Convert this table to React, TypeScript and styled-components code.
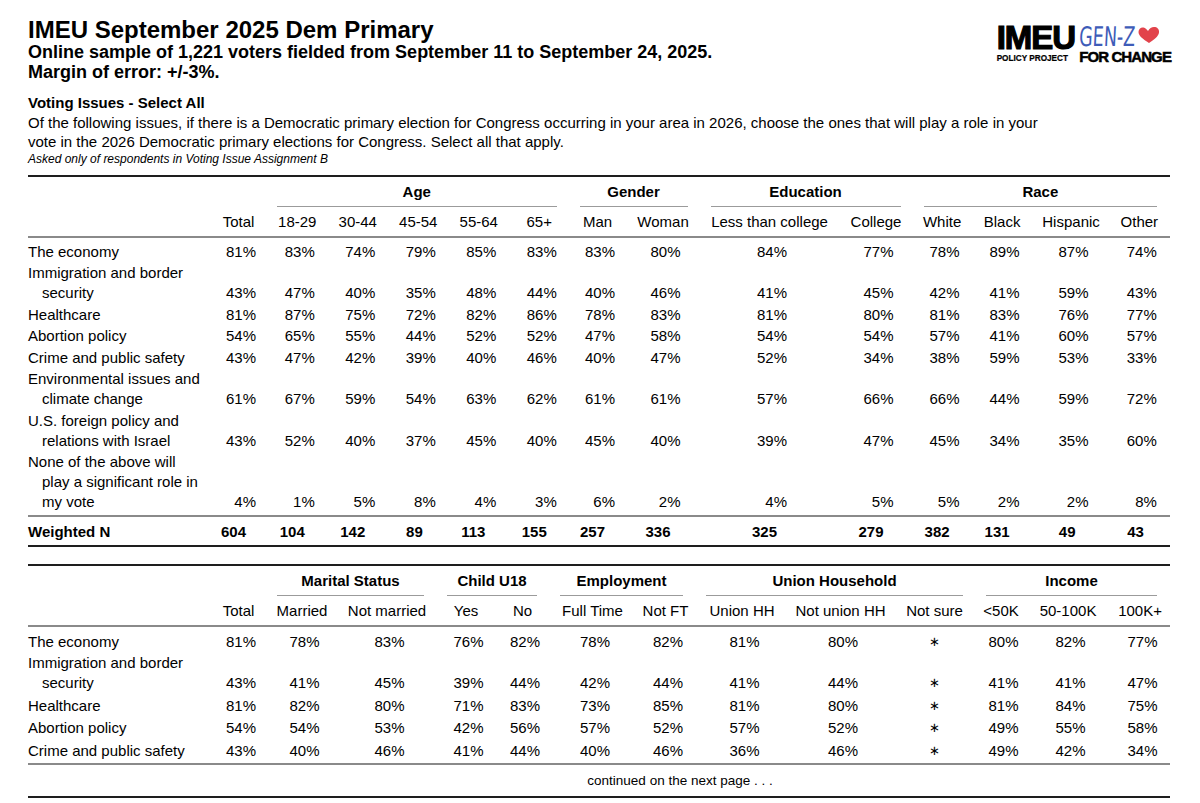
import * as React from "react";
import styled, { createGlobalStyle } from "styled-components";

const GlobalStyle = createGlobalStyle`
  html, body {
    margin: 0;
    padding: 0;
    background: #ffffff;
  }
  body {
    font-family: "Liberation Sans", Arial, Helvetica, sans-serif;
    color: #000;
  }
`;

type Cell = { v: string; star?: boolean };
type Row = { label: string[]; cells: Cell[] };
type Group = { label?: string; span: number };

const pct = (list: (number | "*")[]): Cell[] =>
  list.map((n) => (n === "*" ? { v: "\u2217", star: true } : { v: `${n}%` }));

const topWidths = [182, 57, 60.5, 60.5, 60.5, 60.5, 60.5, 56, 75, 138, 75, 57, 63, 75, 61.5];
const topHeads = [
  "Total", "18-29", "30-44", "45-54", "55-64", "65+", "Man", "Woman",
  "Less than college", "College", "White", "Black", "Hispanic", "Other",
];
const topGroups: Group[] = [
  { span: 2 },
  { label: "Age", span: 5 },
  { label: "Gender", span: 2 },
  { label: "Education", span: 2 },
  { label: "Race", span: 4 },
];
const topRows: Row[] = [
  { label: ["The economy"], cells: pct([81, 83, 74, 79, 85, 83, 83, 80, 84, 77, 78, 89, 87, 74]) },
  { label: ["Immigration and border", "security"], cells: pct([43, 47, 40, 35, 48, 44, 40, 46, 41, 45, 42, 41, 59, 43]) },
  { label: ["Healthcare"], cells: pct([81, 87, 75, 72, 82, 86, 78, 83, 81, 80, 81, 83, 76, 77]) },
  { label: ["Abortion policy"], cells: pct([54, 65, 55, 44, 52, 52, 47, 58, 54, 54, 57, 41, 60, 57]) },
  { label: ["Crime and public safety"], cells: pct([43, 47, 42, 39, 40, 46, 40, 47, 52, 34, 38, 59, 53, 33]) },
  { label: ["Environmental issues and", "climate change"], cells: pct([61, 67, 59, 54, 63, 62, 61, 61, 57, 66, 66, 44, 59, 72]) },
  { label: ["U.S. foreign policy and", "relations with Israel"], cells: pct([43, 52, 40, 37, 45, 40, 45, 40, 39, 47, 45, 34, 35, 60]) },
  {
    label: ["None of the above will", "play a significant role in", "my vote"],
    cells: pct([4, 1, 5, 8, 4, 3, 6, 2, 4, 5, 5, 2, 2, 8]),
  },
];
const topN = ["604", "104", "142", "89", "113", "155", "257", "336", "325", "279", "382", "131", "49", "43"];

const bottomWidths = [182, 57, 70, 100, 58, 55, 85, 61, 92, 105, 83, 50, 84, 60];
const bottomHeads = [
  "Total", "Married", "Not married", "Yes", "No", "Full Time", "Not FT",
  "Union HH", "Not union HH", "Not sure", "<50K", "50-100K", "100K+",
];
const bottomGroups: Group[] = [
  { span: 2 },
  { label: "Marital Status", span: 2 },
  { label: "Child U18", span: 2 },
  { label: "Employment", span: 2 },
  { label: "Union Household", span: 3 },
  { label: "Income", span: 3 },
];
const bottomRows: Row[] = [
  { label: ["The economy"], cells: pct([81, 78, 83, 76, 82, 78, 82, 81, 80, "*", 80, 82, 77]) },
  { label: ["Immigration and border", "security"], cells: pct([43, 41, 45, 39, 44, 42, 44, 41, 44, "*", 41, 41, 47]) },
  { label: ["Healthcare"], cells: pct([81, 82, 80, 71, 83, 73, 85, 81, 80, "*", 81, 84, 75]) },
  { label: ["Abortion policy"], cells: pct([54, 54, 53, 42, 56, 57, 52, 57, 52, "*", 49, 55, 58]) },
  { label: ["Crime and public safety"], cells: pct([43, 40, 46, 41, 44, 40, 46, 36, 46, "*", 49, 42, 34]) },
];

const Page = styled.div`
  padding: 18px 29px 0 28px;
`;

const Header = styled.header`
  display: flex;
  justify-content: space-between;
  align-items: flex-start;
`;

const TitleBlock = styled.div`
  display: flex;
  flex-direction: column;
`;

const Title = styled.h1`
  margin: 0;
  font-size: 24px;
  line-height: 24px;
  font-weight: bold;
`;

const Subtitle = styled.div`
  font-size: 18px;
  line-height: 20px;
  font-weight: bold;
`;

const Logo = styled.div`
  display: flex;
  gap: 4px;
  margin-top: 4px;
`;

const LogoStack = styled.div<{ $offset?: number }>`
  display: flex;
  flex-direction: column;
  padding-top: ${(p) => p.$offset ?? 0}px;
`;

const Imeu = styled.div`
  font-size: 33px;
  line-height: 29px;
  font-weight: bold;
  letter-spacing: -1px;
  -webkit-text-stroke: 1.2px #000;
`;

const PolicyLine = styled.div`
  margin-top: 2px;
  font-size: 8.2px;
  line-height: 10px;
  font-weight: bold;
  white-space: nowrap;
  -webkit-text-stroke: 0.2px #000;
`;

const GenZ = styled.svg`
  display: block;
  margin-top: -4px;
  overflow: visible;
`;

const ForChange = styled.div`
  margin-top: 1.8px;
  font-size: 15px;
  line-height: 14px;
  font-weight: bold;
  letter-spacing: -0.9px;
  white-space: nowrap;
  -webkit-text-stroke: 0.5px #000;
`;

const Question = styled.section`
  margin-top: 11px;
`;

const QuestionTitle = styled.div`
  font-size: 15px;
  line-height: 20px;
  font-weight: bold;
`;

const QuestionText = styled.p`
  margin: 0;
  max-width: 1025px;
  font-size: 15px;
  line-height: 19px;
`;

const Note = styled.div`
  margin-top: 1px;
  font-size: 12px;
  line-height: 14px;
  font-style: italic;
`;

const Crosstab = styled.table<{ $gap: number }>`
  margin-top: ${(p) => p.$gap}px;
  width: 1142px;
  table-layout: fixed;
  border-collapse: separate;
  border-spacing: 0;
  border-top: 2px solid #1e1e1e;
  border-bottom: 2px solid #1e1e1e;
  font-size: 15px;
  line-height: 20px;
`;

const Col = styled.col<{ $w: number }>`
  width: ${(p) => p.$w}px;
`;

const GroupHead = styled.th`
  padding: 5px 0 0;
  vertical-align: bottom;
  font-weight: bold;
  text-align: center;
`;

const GroupRule = styled.div`
  margin: 0 13px 0 10px;
  padding-bottom: 3.5px;
  border-bottom: 1.5px solid #9b9b9b;
  white-space: nowrap;
`;

const ColHead = styled.th`
  padding: 5px 0 4px;
  border-bottom: 2px solid #8a8a8a;
  font-weight: normal;
  text-align: center;
  white-space: nowrap;
`;

const BodyRow = styled.tr<{ $pos: "first" | "mid" | "last" }>`
  & > td {
    padding-top: ${(p) => (p.$pos === "first" ? 4 : 1)}px;
    padding-bottom: ${(p) => (p.$pos === "last" ? 2.5 : 0.5)}px;
  }
`;

const TotalRow = styled.tr`
  & > td {
    padding: 5px 0 3.5px;
    border-top: 2px solid #8a8a8a;
    font-weight: bold;
  }
`;

const LabelCell = styled.td`
  padding-left: 14px !important;
  padding-right: 0;
  text-indent: -14px;
  vertical-align: bottom;
  text-align: left;
`;

const ValueCell = styled.td`
  text-align: center;
  vertical-align: bottom;
  white-space: nowrap;
`;

const Slot = styled.span<{ $n?: boolean }>`
  display: inline-block;
  box-sizing: border-box;
  width: 35px;
  padding-right: ${(p) => (p.$n ? 13 : 0)}px;
  text-align: right;
`;

const Star = styled.span`
  font-family: "DejaVu Sans", sans-serif;
  font-size: 13px;
`;

const ContinuedRow = styled.tr`
  & > td {
    padding: 6px 0 5px;
    border-top: 2px solid #8a8a8a;
    font-size: 13.5px;
  }
`;

const ContinuedText = styled.td`
  text-align: center;
  padding-right: 20px !important;
`;

type TableProps = {
  widths: number[];
  groups: Group[];
  heads: string[];
  rows: Row[];
  totals?: string[];
  gap: number;
  continued?: boolean;
};

const CrossTable = ({ widths, groups, heads, rows, totals, gap, continued }: TableProps) => (
  <Crosstab $gap={gap}>
    <colgroup>
      {widths.map((w, i) => (
        <Col key={i} $w={w} />
      ))}
    </colgroup>
    <thead>
      <tr>
        {groups.map((g, i) => (
          <GroupHead key={i} colSpan={g.span}>
            {g.label && <GroupRule>{g.label}</GroupRule>}
          </GroupHead>
        ))}
      </tr>
      <tr>
        <ColHead />
        {heads.map((h) => (
          <ColHead key={h}>{h}</ColHead>
        ))}
      </tr>
    </thead>
    <tbody>
      {rows.map((r, i) => (
        <BodyRow key={i} $pos={i === 0 ? "first" : i === rows.length - 1 ? "last" : "mid"}>
          <LabelCell>
            {r.label.map((line, j) => (
              <React.Fragment key={j}>
                {j > 0 && <br />}
                {line}
              </React.Fragment>
            ))}
          </LabelCell>
          {r.cells.map((c, j) => (
            <ValueCell key={j}>{c.star ? <Star>{c.v}</Star> : <Slot>{c.v}</Slot>}</ValueCell>
          ))}
        </BodyRow>
      ))}
      {totals && (
        <TotalRow>
          <LabelCell>Weighted N</LabelCell>
          {totals.map((n, j) => (
            <ValueCell key={j}>
              <Slot $n>{n}</Slot>
            </ValueCell>
          ))}
        </TotalRow>
      )}
      {continued && (
        <ContinuedRow>
          <td />
          <ContinuedText colSpan={widths.length - 1}>continued on the next page . . .</ContinuedText>
        </ContinuedRow>
      )}
    </tbody>
  </Crosstab>
);

const App = () => (
  <Page>
    <GlobalStyle />
    <Header>
      <TitleBlock>
        <Title>IMEU September 2025 Dem Primary</Title>
        <Subtitle>Online sample of 1,221 voters fielded from September 11 to September 24, 2025.</Subtitle>
        <Subtitle>Margin of error: +/-3%.</Subtitle>
      </TitleBlock>
      <Logo>
        <LogoStack $offset={1}>
          <Imeu>IMEU</Imeu>
          <PolicyLine>POLICY PROJECT</PolicyLine>
        </LogoStack>
        <LogoStack>
          <GenZ width="90" height="30" viewBox="0 -4 90 30">
            <text
              x="0"
              y="24"
              fontFamily="'DejaVu Sans Condensed', 'DejaVu Sans', sans-serif"
              fontSize="27"
              fill="#3e5cb8"
              transform="matrix(0.72 0 -0.05 1 1 0)"
            >
              GEN-Z
            </text>
            <path
              d="M70 21 C64 17 59.5 14 59.5 10 C59.5 7 62 5 64.5 5.5 C66.5 6 68 7.5 69 9 C70.5 6.5 72.5 5 75 5 C78 5 80.5 7 80 10.5 C79.5 14.5 75 17.5 70 21 Z"
              fill="#e2434b"
            />
          </GenZ>
          <ForChange>FOR CHANGE</ForChange>
        </LogoStack>
      </Logo>
    </Header>

    <Question>
      <QuestionTitle>Voting Issues - Select All</QuestionTitle>
      <QuestionText>
        Of the following issues, if there is a Democratic primary election for Congress occurring in your area in
        2026, choose the ones that will play a role in your vote in the 2026 Democratic primary elections for
        Congress. Select all that apply.
      </QuestionText>
      <Note>Asked only of respondents in Voting Issue Assignment B</Note>
    </Question>

    <CrossTable widths={topWidths} groups={topGroups} heads={topHeads} rows={topRows} totals={topN} gap={9} />
    <CrossTable
      widths={bottomWidths}
      groups={bottomGroups}
      heads={bottomHeads}
      rows={bottomRows}
      gap={17}
      continued
    />
  </Page>
);

export default App;
